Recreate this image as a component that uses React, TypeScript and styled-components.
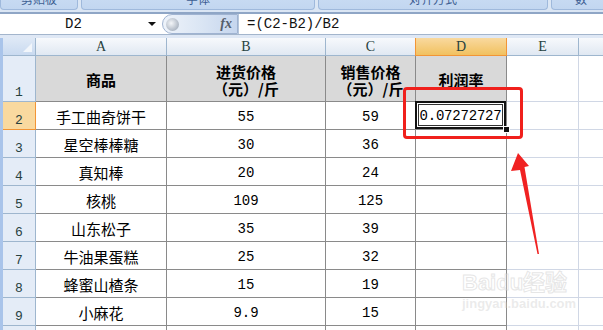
import React from "react";
import styled, { createGlobalStyle, css } from "styled-components";

const GlobalStyle = createGlobalStyle`
  html, body {
    margin: 0;
    padding: 0;
    background: #ffffff;
    overflow: hidden;
  }
  body {
    font-family: "Noto Sans CJK SC", "Liberation Sans", sans-serif;
  }
`;

const cols = [131, 159, 90, 91, 72, 60];
const letters = ["A", "B", "C", "D", "E", ""];

const rows = [
  ["手工曲奇饼干", "55", "59"],
  ["星空棒棒糖", "30", "36"],
  ["真知棒", "20", "24"],
  ["核桃", "109", "125"],
  ["山东松子", "35", "39"],
  ["牛油果蛋糕", "25", "32"],
  ["蜂蜜山楂条", "15", "19"],
  ["小麻花", "9.9", "15"],
];

function App() {
  return (
    <Page>
      <GlobalStyle />
      <Ribbon>
        <RibbonGroup $w={78}>
          <span>剪贴板</span>
        </RibbonGroup>
        <RibbonGroup $w={234}>
          <span>字体</span>
        </RibbonGroup>
        <RibbonGroup $w={230}>
          <span>对齐方式</span>
        </RibbonGroup>
        <RibbonGroup $w={60}>
          <span>数</span>
        </RibbonGroup>
      </Ribbon>

      <FormulaBar>
        <NameBox>
          <span>D2</span>
          <DropArrow />
        </NameBox>
        <FxButton>
          <Knob />
          <Fx>fx</Fx>
        </FxButton>
        <FormulaText>=(C2-B2)/B2</FormulaText>
      </FormulaBar>

      <Sheet>
        <Corner />
        {letters.map((l, i) => (
          <ColHeader key={i} $selected={l === "D"}>
            {l}
          </ColHeader>
        ))}

        <RowHeader $h={46}>1</RowHeader>
        <Cell $kind="head">商品</Cell>
        <Cell $kind="head">
          进货价格
          <br />
          （元）/斤
        </Cell>
        <Cell $kind="head">
          销售价格
          <br />
          （元）/斤
        </Cell>
        <Cell $kind="head">利润率</Cell>
        <Cell $kind="blank" />
        <Cell $kind="blank" />

        {rows.map((r, i) => (
          <React.Fragment key={i}>
            <RowHeader $h={28} $selected={i === 0}>
              {i + 2}
            </RowHeader>
            <Cell $kind="text">{r[0]}</Cell>
            <Cell $kind="num">{r[1]}</Cell>
            <Cell $kind="num">{r[2]}</Cell>
            {i === 0 ? (
              <ActiveCell>
                0.07272727
                <FillHandle />
              </ActiveCell>
            ) : (
              <Cell $kind="num" />
            )}
            <Cell $kind="blank" />
            <Cell $kind="blank" />
          </React.Fragment>
        ))}

        <RowHeader $h={28}>10</RowHeader>
        <Cell $kind="text" />
        <Cell $kind="num" />
        <Cell $kind="num" />
        <Cell $kind="num" />
        <Cell $kind="blank" />
        <Cell $kind="blank" />
      </Sheet>

      <Highlight />
      <Arrow width="40" height="106" viewBox="0 0 40 106">
        <polygon points="13,0 24,13 19.5,14 34,101 32.5,101 15,17 6,18" fill="#f02222" />
      </Arrow>

      <Watermark>
        <Brand>Baidu经验</Brand>
        <Site>jingyan.baidu.com</Site>
      </Watermark>
    </Page>
  );
}

const Page = styled.div`
  position: relative;
  width: 603px;
  height: 330px;
  overflow: hidden;
  background: #dfe8f5;
`;

const Ribbon = styled.div`
  display: flex;
  gap: 3px;
  height: 10px;
  padding-bottom: 2px;
  background: #dbe6f4;
`;

const RibbonGroup = styled.div<{ $w: number }>`
  flex: 0 0 ${(p) => p.$w}px;
  height: 10px;
  box-sizing: border-box;
  overflow: hidden;
  background: linear-gradient(#c7daf2, #c2d6f0);
  border: 1px solid #9fb9dc;
  border-top: none;
  border-radius: 0 0 4px 4px;
  text-align: center;

  span {
    display: block;
    margin-top: -8px;
    font-size: 12px;
    line-height: 14px;
    color: #3e5f93;
  }
`;

const FormulaBar = styled.div`
  display: flex;
  align-items: stretch;
  height: 20px;
  border-top: 2px solid #8fa6c6;
  border-bottom: 1px solid #a3b5cc;
  background: #ffffff;
  margin-bottom: 3px;
`;

const NameBox = styled.div`
  position: relative;
  flex: 0 0 157px;
  margin-left: 3px;
  display: flex;
  align-items: center;
  justify-content: center;
  padding-right: 16px;
  box-sizing: border-box;
  font-family: "Liberation Mono", "DejaVu Sans Mono", monospace;
  font-size: 14px;
  color: #111;
`;

const DropArrow = styled.i`
  position: absolute;
  right: 4px;
  top: 8px;
  width: 0;
  height: 0;
  border-left: 4px solid transparent;
  border-right: 4px solid transparent;
  border-top: 4px solid #111;
`;

const FxButton = styled.div`
  flex: 0 0 76px;
  margin-left: 2px;
  display: flex;
  align-items: center;
  justify-content: space-between;
  box-sizing: border-box;
  padding: 0 5px 0 3px;
  border: 1px solid #9fb3d1;
  border-radius: 10px 0 0 10px;
  background: linear-gradient(90deg, #eef3fa 0%, #dbe6f4 50%, #c6d6ee 100%);
`;

const Knob = styled.div`
  width: 13px;
  height: 13px;
  border-radius: 50%;
  background: radial-gradient(circle at 40% 40%, #f4f6f9, #a9b3c0 75%);
`;

const Fx = styled.span`
  font-family: "Liberation Serif", serif;
  font-style: italic;
  font-weight: bold;
  font-size: 14px;
  color: #555e6c;
`;

const FormulaText = styled.div`
  flex: 1;
  display: flex;
  align-items: center;
  padding-left: 8px;
  border-left: 1px solid #b6c6dc;
  font-family: "Liberation Mono", "DejaVu Sans Mono", monospace;
  font-size: 14px;
  color: #111;
`;

const Sheet = styled.div`
  display: grid;
  grid-template-columns: 33px ${cols.map((c) => `${c}px`).join(" ")};
  grid-auto-rows: auto;
  margin-left: 3px;
  background: #ffffff;
  box-shadow: -3px 0 0 #a9c4ea;
`;

const Corner = styled.div`
  position: relative;
  height: 18px;
  box-sizing: border-box;
  background: linear-gradient(#dfe9f6, #c9daf0);
  border-right: 1px solid #9eb6ce;
  border-bottom: 1px solid #9eb6ce;

  &::after {
    content: "";
    position: absolute;
    right: 3px;
    bottom: 3px;
    border-left: 9px solid transparent;
    border-bottom: 9px solid #f2f6fb;
  }
`;

const ColHeader = styled.div<{ $selected?: boolean }>`
  height: 18px;
  box-sizing: border-box;
  display: flex;
  align-items: center;
  justify-content: center;
  font-family: "Liberation Serif", serif;
  font-size: 14px;
  color: #27413e;
  border-right: 1px solid #9eb6ce;
  border-bottom: 1px solid #9eb6ce;
  background: linear-gradient(#f7f9fc, #e0e8f2);

  ${(p) =>
    p.$selected &&
    css`
      background: linear-gradient(#f9d99f, #f1c15f);
      border-right: 1px solid #f29536;
      border-bottom: 1px solid #f29536;
      border-left: 1px solid #f29536;
      margin-left: -1px;
    `}
`;

const RowHeader = styled.div<{ $h: number; $selected?: boolean }>`
  height: ${(p) => p.$h}px;
  box-sizing: border-box;
  display: flex;
  align-items: flex-end;
  justify-content: center;
  padding-bottom: 1px;
  font-family: "Liberation Mono", "DejaVu Sans Mono", monospace;
  font-size: 13px;
  color: #27413e;
  background: #e4ecf7;
  border-right: 1px solid #9eb6ce;
  border-bottom: 1px solid #9eb6ce;

  ${(p) =>
    p.$selected &&
    css`
      background: #f9d99f;
      border-right: 1px solid #f29536;
      border-bottom: 1px solid #f29536;
    `}
`;

type Kind = "head" | "text" | "num" | "blank";

const Cell = styled.div<{ $kind: Kind }>`
  box-sizing: border-box;
  display: flex;
  align-items: center;
  justify-content: center;
  text-align: center;
  color: #000;
  border-right: 1px solid #8a8a8a;
  border-bottom: 1px solid #8a8a8a;
  padding-top: 2px;

  ${(p) =>
    p.$kind === "head" &&
    css`
      background: #d9d9d9;
      font-weight: bold;
      font-size: 15px;
      line-height: 17px;
    `}
  ${(p) =>
    p.$kind === "text" &&
    css`
      font-size: 15px;
    `}
  ${(p) =>
    p.$kind === "num" &&
    css`
      font-family: "Liberation Mono", "DejaVu Sans Mono", monospace;
      font-size: 14px;
    `}
  ${(p) =>
    p.$kind === "blank" &&
    css`
      border-right: 1px solid #d0d7e5;
      border-bottom: 1px solid #d0d7e5;
    `}
`;

const ActiveCell = styled.div`
  position: relative;
  box-sizing: border-box;
  display: flex;
  align-items: center;
  justify-content: center;
  padding-top: 2px;
  font-family: "Liberation Mono", "DejaVu Sans Mono", monospace;
  font-size: 14px;
  letter-spacing: -0.2px;
  color: #000;
  border-right: 1px solid #8a8a8a;
  border-bottom: 1px solid #8a8a8a;
  box-shadow: inset 0 0 0 2px #111, inset 0 0 0 3px #fff, inset 0 0 0 4px #333;
  margin: -1px 0 0 -1px;
`;

const FillHandle = styled.i`
  position: absolute;
  right: -4px;
  bottom: -4px;
  width: 5px;
  height: 5px;
  background: #111;
  border: 1px solid #fff;
`;

const Highlight = styled.div`
  position: absolute;
  left: 403px;
  top: 87px;
  width: 120px;
  height: 52px;
  box-sizing: border-box;
  border: 3px solid #f0201c;
  border-radius: 4px;
  pointer-events: none;
`;

const Arrow = styled.svg`
  position: absolute;
  left: 505px;
  top: 153px;
  pointer-events: none;
`;

const Watermark = styled.div`
  position: absolute;
  left: 462px;
  top: 270px;
  display: flex;
  flex-direction: column;
  pointer-events: none;
`;

const Brand = styled.div`
  font-family: "Liberation Sans", "Noto Sans CJK SC", sans-serif;
  font-size: 22px;
  font-weight: bold;
  line-height: 26px;
  -webkit-text-stroke: 1px rgba(205, 205, 205, 0.5);
  color: rgba(255, 255, 255, 0.3);
`;

const Site = styled.div`
  font-family: "Liberation Sans", sans-serif;
  font-size: 13px;
  line-height: 16px;
  font-weight: bold;
  color: rgba(210, 210, 210, 0.45);
`;

export default App;
